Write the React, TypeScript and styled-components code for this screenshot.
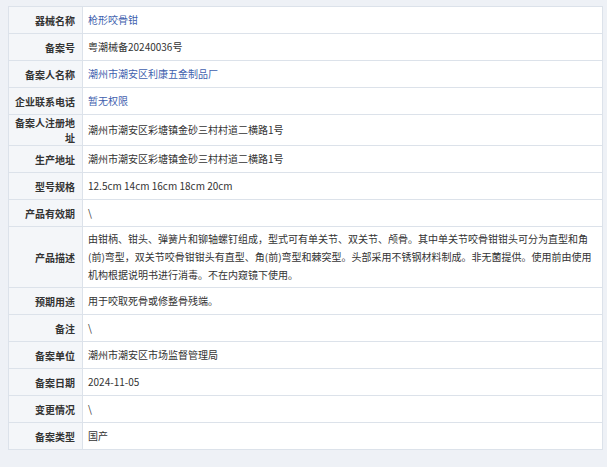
import styled, { createGlobalStyle } from 'styled-components';

const Global = createGlobalStyle`
  body {
    margin: 0;
    background: #eef1f6;
    font-family: "Microsoft YaHei", "Noto Sans CJK SC", sans-serif;
  }
`;

const Page = styled.div`
  padding: 6px 4px 11px 8px;
`;

const Table = styled.table`
  width: 100%;
  border-collapse: collapse;
  background: #fff;
  font-size: 10px;
`;

const Label = styled.th`
  width: 74px;
  background: #f4f6f9;
  border: 1px solid #dce2ea;
  text-align: right;
  font-weight: bold;
  color: #333;
  padding: 0 7px 0 0;
  height: 27px;
  box-sizing: border-box;
`;

const Value = styled.td<{ $link?: boolean }>`
  border: 1px solid #dce2ea;
  padding: 3px 5px;
  color: ${p => (p.$link ? '#3f5fae' : '#333')};
  line-height: 18px;
`;

const rows: [string, string, boolean?][] = [
  ['器械名称', '枪形咬骨钳', true],
  ['备案号', '粤潮械备20240036号'],
  ['备案人名称', '潮州市潮安区利康五金制品厂', true],
  ['企业联系电话', '暂无权限', true],
  ['备案人注册地址', '潮州市潮安区彩塘镇金砂三村村道二横路1号'],
  ['生产地址', '潮州市潮安区彩塘镇金砂三村村道二横路1号'],
  ['型号规格', '12.5cm 14cm 16cm 18cm 20cm'],
  ['产品有效期', '\\'],
  ['产品描述', '由钳柄、钳头、弹簧片和铆轴螺钉组成，型式可有单关节、双关节、颅骨。其中单关节咬骨钳钳头可分为直型和角(前)弯型，双关节咬骨钳钳头有直型、角(前)弯型和棘突型。头部采用不锈钢材料制成。非无菌提供。使用前由使用机构根据说明书进行消毒。不在内窥镜下使用。'],
  ['预期用途', '用于咬取死骨或修整骨残端。'],
  ['备注', '\\'],
  ['备案单位', '潮州市潮安区市场监督管理局'],
  ['备案日期', '2024-11-05'],
  ['变更情况', '\\'],
  ['备案类型', '国产'],
];

export default function App() {
  return (
    <Page>
      <Global />
      <Table>
        <tbody>
          {rows.map(([k, v, link]) => (
            <tr key={k}>
              <Label>{k}</Label>
              <Value $link={link}>{v}</Value>
            </tr>
          ))}
        </tbody>
      </Table>
    </Page>
  );
}
